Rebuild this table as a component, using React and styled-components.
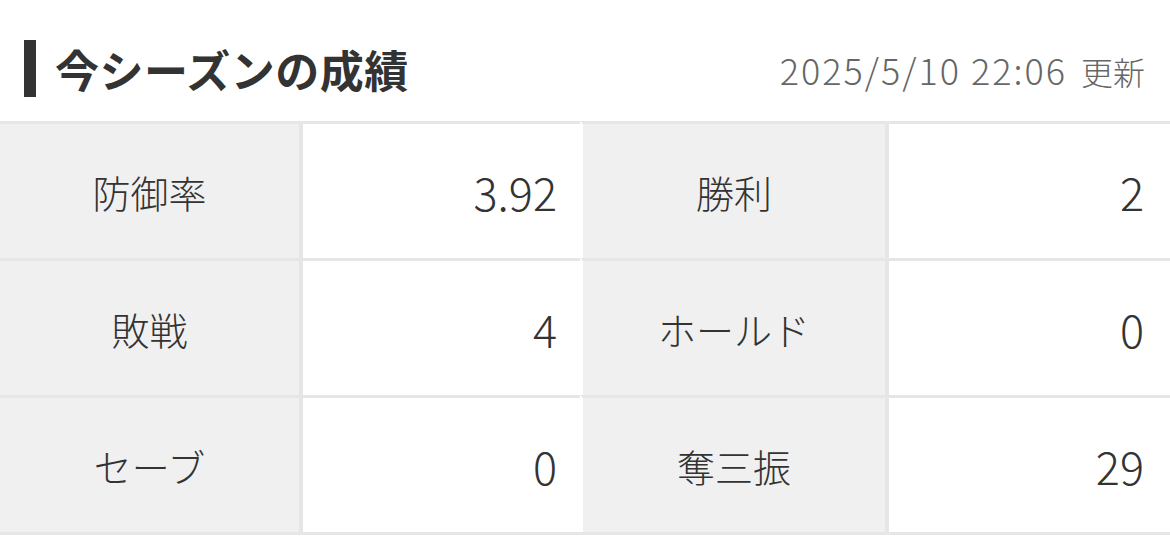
import React from "react";
import styled, { createGlobalStyle } from "styled-components";

const GlobalStyle = createGlobalStyle`
  html, body {
    margin: 0;
    padding: 0;
    background: #fff;
    font-family: "Noto Sans CJK JP", "Noto Sans", sans-serif;
    color: #333;
  }
`;

const Wrapper = styled.div`
  width: 1170px;
`;

const Header = styled.div`
  display: flex;
  align-items: center;
  justify-content: space-between;
  height: 121px;
  padding: 16px 25px 0 24px;
  box-sizing: border-box;
`;

const Title = styled.h2`
  margin: 0;
  display: flex;
  align-items: center;
  gap: 19px;
  font-size: 44px;
  font-weight: 700;
  color: #333;
  letter-spacing: 0.5px;

  &::before {
    content: "";
    display: block;
    width: 12px;
    height: 57px;
    background: #333;
  }
`;

const Updated = styled.span`
  font-size: 36px;
  font-weight: 300;
  color: #666;
  letter-spacing: 2px;
`;

const Suffix = styled.span`
  font-size: 32px;
  letter-spacing: 0;
  margin-left: 4px;
`;

const Table = styled.div`
  display: grid;
  grid-template-columns: 303px 277px 309px 281px;
  border-bottom: 3px solid #e6e6e6;
`;

const Row = styled.div`
  display: contents;
`;

const Label = styled.div`
  height: 134px;
  border-top: 3px solid #e6e6e6;
  border-right: 4px solid #e6e6e6;
  border-left: ${(p) => (p.second ? "3px solid #fff" : "none")};
  background: #f0f0f0;
  display: flex;
  align-items: center;
  justify-content: center;
  font-size: 38px;
  font-weight: 300;
  color: #333;
`;

const Value = styled.div`
  height: 134px;
  border-top: 3px solid #e6e6e6;
  background: #fff;
  display: flex;
  align-items: center;
  justify-content: flex-end;
  padding-right: ${(p) => (p.last ? "26px" : "23px")};
  font-size: 45px;
  font-weight: 300;
  color: #333;
`;

const stats = [
  [
    ["防御率", "3.92"],
    ["勝利", "2"],
  ],
  [
    ["敗戦", "4"],
    ["ホールド", "0"],
  ],
  [
    ["セーブ", "0"],
    ["奪三振", "29"],
  ],
];

export default function App() {
  return (
    <Wrapper>
      <GlobalStyle />
      <Header>
        <Title>今シーズンの成績</Title>
        <Updated>
          2025/5/10 22:06{" "}<Suffix>更新</Suffix>
        </Updated>
      </Header>
      <Table>
        {stats.map((row, i) => (
          <Row key={i}>
            <Label>{row[0][0]}</Label>
            <Value>{row[0][1]}</Value>
            <Label second>{row[1][0]}</Label>
            <Value last>{row[1][1]}</Value>
          </Row>
        ))}
      </Table>
    </Wrapper>
  );
}
